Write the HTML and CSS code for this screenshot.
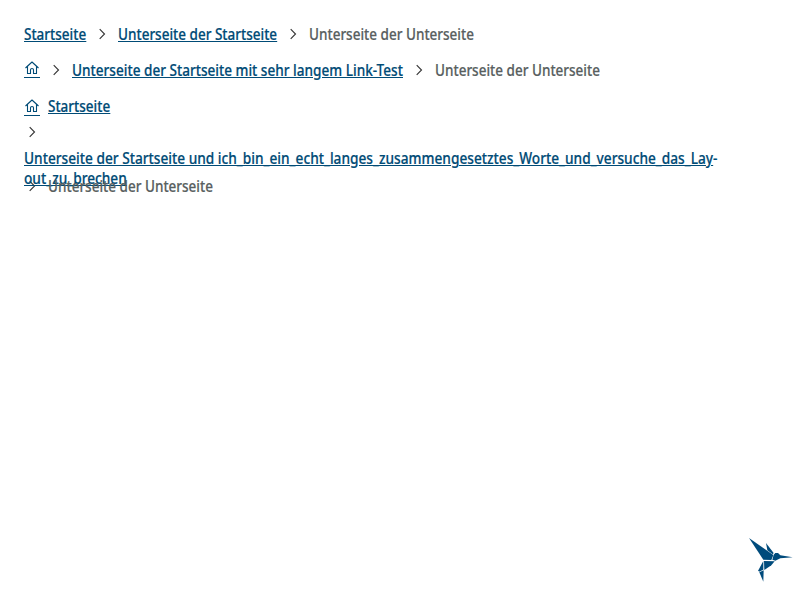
FILE: index.html
```
<!DOCTYPE html>
<html lang="de">
<head>
<meta charset="utf-8">
<title>Breadcrumb</title>
<link rel="stylesheet" href="styles.css">
</head>
<body>
<svg width="0" height="0" class="symbols">
  <symbol id="chevron" viewBox="0 0 16 16"><path d="M5.7 3.2L10.5 8L5.7 12.8" fill="none" stroke="currentColor" stroke-width="1.1"/></symbol>
  <symbol id="home" viewBox="0 0 16 16"><path d="M1.5 8L8 2L14.5 8M3.5 6.5V13.5H6.5V9.7Q6.5 8.5 8 8.5T9.5 9.7V13.5H12.5V6.5" fill="none" stroke="currentColor" stroke-width="1.1" stroke-linejoin="round"/></symbol>
</svg>
<main class="page">
  <nav class="crumbs">
    <a class="link w-start" href="#"><span class="label">Startseite</span></a>
    <svg class="icon"><use href="#chevron"/></svg>
    <a class="link w-sub" href="#"><span class="label">Unterseite der Startseite</span></a>
    <svg class="icon"><use href="#chevron"/></svg>
    <span class="current"><span class="label">Unterseite der Unterseite</span></span>
  </nav>
  <nav class="crumbs">
    <a class="home" href="#"><svg class="icon"><use href="#home"/></svg></a>
    <svg class="icon"><use href="#chevron"/></svg>
    <a class="link w-long" href="#"><span class="label">Unterseite der Startseite mit sehr langem Link-Test</span></a>
    <svg class="icon"><use href="#chevron"/></svg>
    <span class="current"><span class="label">Unterseite der Unterseite</span></span>
  </nav>
  <nav class="stack">
    <div class="crumbs">
      <a class="home low" href="#"><svg class="icon"><use href="#home"/></svg></a>
      <a class="link w-start" href="#"><span class="label">Startseite</span></a>
    </div>
    <div class="crumbs"><svg class="icon"><use href="#chevron"/></svg></div>
    <div class="overflowing"><a class="link" href="#"><span class="label">Unterseite der Startseite und ich_bin_ein_echt_langes_zusammengesetztes_Worte_und_versuche_das_Lay<span class="hyphen">-</span></span><span class="label">out_zu_brechen</span></a></div>
    <div class="crumbs">
      <svg class="icon"><use href="#chevron"/></svg>
      <span class="current"><span class="label">Unterseite der Unterseite</span></span>
    </div>
  </nav>
</main>
<svg class="bird" viewBox="0 0 180 180">
  <g fill="#004b7c">
    <path d="M27 24L100 75L94 90L70 89Z"/>
    <path d="M78 39L101 69L98 73L82 61Z"/>
    <path d="M101 74L106 69L114 69L121 76L158 82L121 85L106 92L97 89Z"/>
    <path d="M72 93L104 94L94 106L73 120Z"/>
    <path d="M70 93L70 119L57 125L55 121Z"/>
    <path d="M58 127L71 121L70 155Z"/>
  </g>
</svg>
</body>
</html>
```

FILE: styles.css
```
body {
  margin: 0;
  background: #fff;
  color: #595f5f;
  font: 500 16px/20px "Noto Sans", sans-serif;
  -webkit-text-stroke: 0.2px currentColor;
}
.symbols { position: absolute; }
.page { width: 752px; padding: 24px; display: flex; flex-direction: column; gap: 16px; }
.crumbs { display: flex; gap: 8px; height: 20px; align-items: center; white-space: nowrap; }
.stack { display: flex; flex-direction: column; gap: 6px; }
.icon { display: block; width: 16px; height: 16px; flex: none; color: #333; }
.label {
  display: block;
  width: max-content;
  white-space: nowrap;
  transform: scaleX(.845);
  transform-origin: left;
}
.link, .current { display: block; flex: none; }
.link { color: #004b76; }
.link .label {
  text-decoration: underline;
  text-decoration-thickness: 1px;
  text-underline-offset: 1px;
}
.w-start { width: 62px; }
.w-sub { width: 159px; }
.w-long { width: 331px; }
.w-long .label { transform: scaleX(.85); }
.current { width: 165px; }
.home { align-self: flex-start; height: 17px; border-bottom: 1px solid #004b76; }
.home .icon { color: #004b76; }
.low { margin-top: 2px; }
.overflowing { height: 22px; }
.overflowing .label { transform: scaleX(.8555); }
.hyphen { display: inline-block; }
.bird { position: fixed; right: 0; bottom: 10px; width: 60px; height: 60px; }
```
